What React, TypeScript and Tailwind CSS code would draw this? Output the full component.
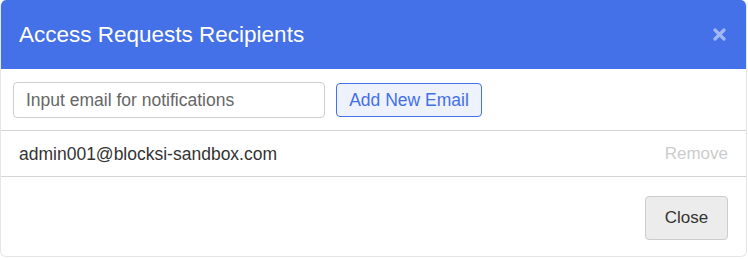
export default function App() {
  const emails = ['admin001@blocksi-sandbox.com'];

  return (
    <div className="w-[748px] h-[259px] bg-white" style={{ fontFamily: '"Liberation Sans", Arial, sans-serif' }}>
      <div className="w-[747px] h-[257px] border-r border-b border-l border-[#e6e6e6] rounded-[6px] overflow-hidden flex flex-col">
        {/* header */}
        <div className="h-[69px] bg-[#4470e8] flex items-center justify-between pl-[18px] pr-[20px] shrink-0">
          <h2 className="text-[22.5px] text-white leading-none pt-[2px]">Access Requests Recipients</h2>
          <button className="text-white/50 pb-[1px]">
            <svg width="13" height="13" viewBox="0 0 13 13">
              <path d="M2 2 L11 11 M11 2 L2 11" stroke="currentColor" strokeWidth="3.2" strokeLinecap="round" />
            </svg>
          </button>
        </div>

        {/* add email */}
        <div className="flex items-center gap-[11px] pl-[12px] pr-[13px] pt-[13px] pb-[12px] border-b border-[#d4d4d4]">
          <input
            placeholder="Input email for notifications"
            className="w-[312px] h-[36px] border border-[#cfcfcf] rounded-[4px] px-[12px] text-[17.5px] text-[#333] placeholder:text-[#666] outline-none"
          />
          <button className="h-[34px] w-[146px] border border-[#4470e8] bg-[#eef2fd] rounded-[4px] text-[17.5px] text-[#4470e8]">
            Add New Email
          </button>
        </div>

        {/* list */}
        {emails.map((email) => (
          <div key={email} className="h-[46px] flex items-center justify-between pl-[18px] pr-[18px] pt-[1px] border-b border-[#d4d4d4]">
            <span className="text-[17.5px] text-[#333]">{email}</span>
            <button className="text-[17px] text-[#cccccc]">Remove</button>
          </div>
        ))}

        {/* footer */}
        <div className="flex-1 flex justify-end pt-[19px] pr-[18px]">
          <button className="h-[44px] w-[83px] bg-[#ececec] border border-[#cccccc] rounded-[4px] text-[17px] text-[#333]">
            Close
          </button>
        </div>
      </div>
    </div>
  );
}
